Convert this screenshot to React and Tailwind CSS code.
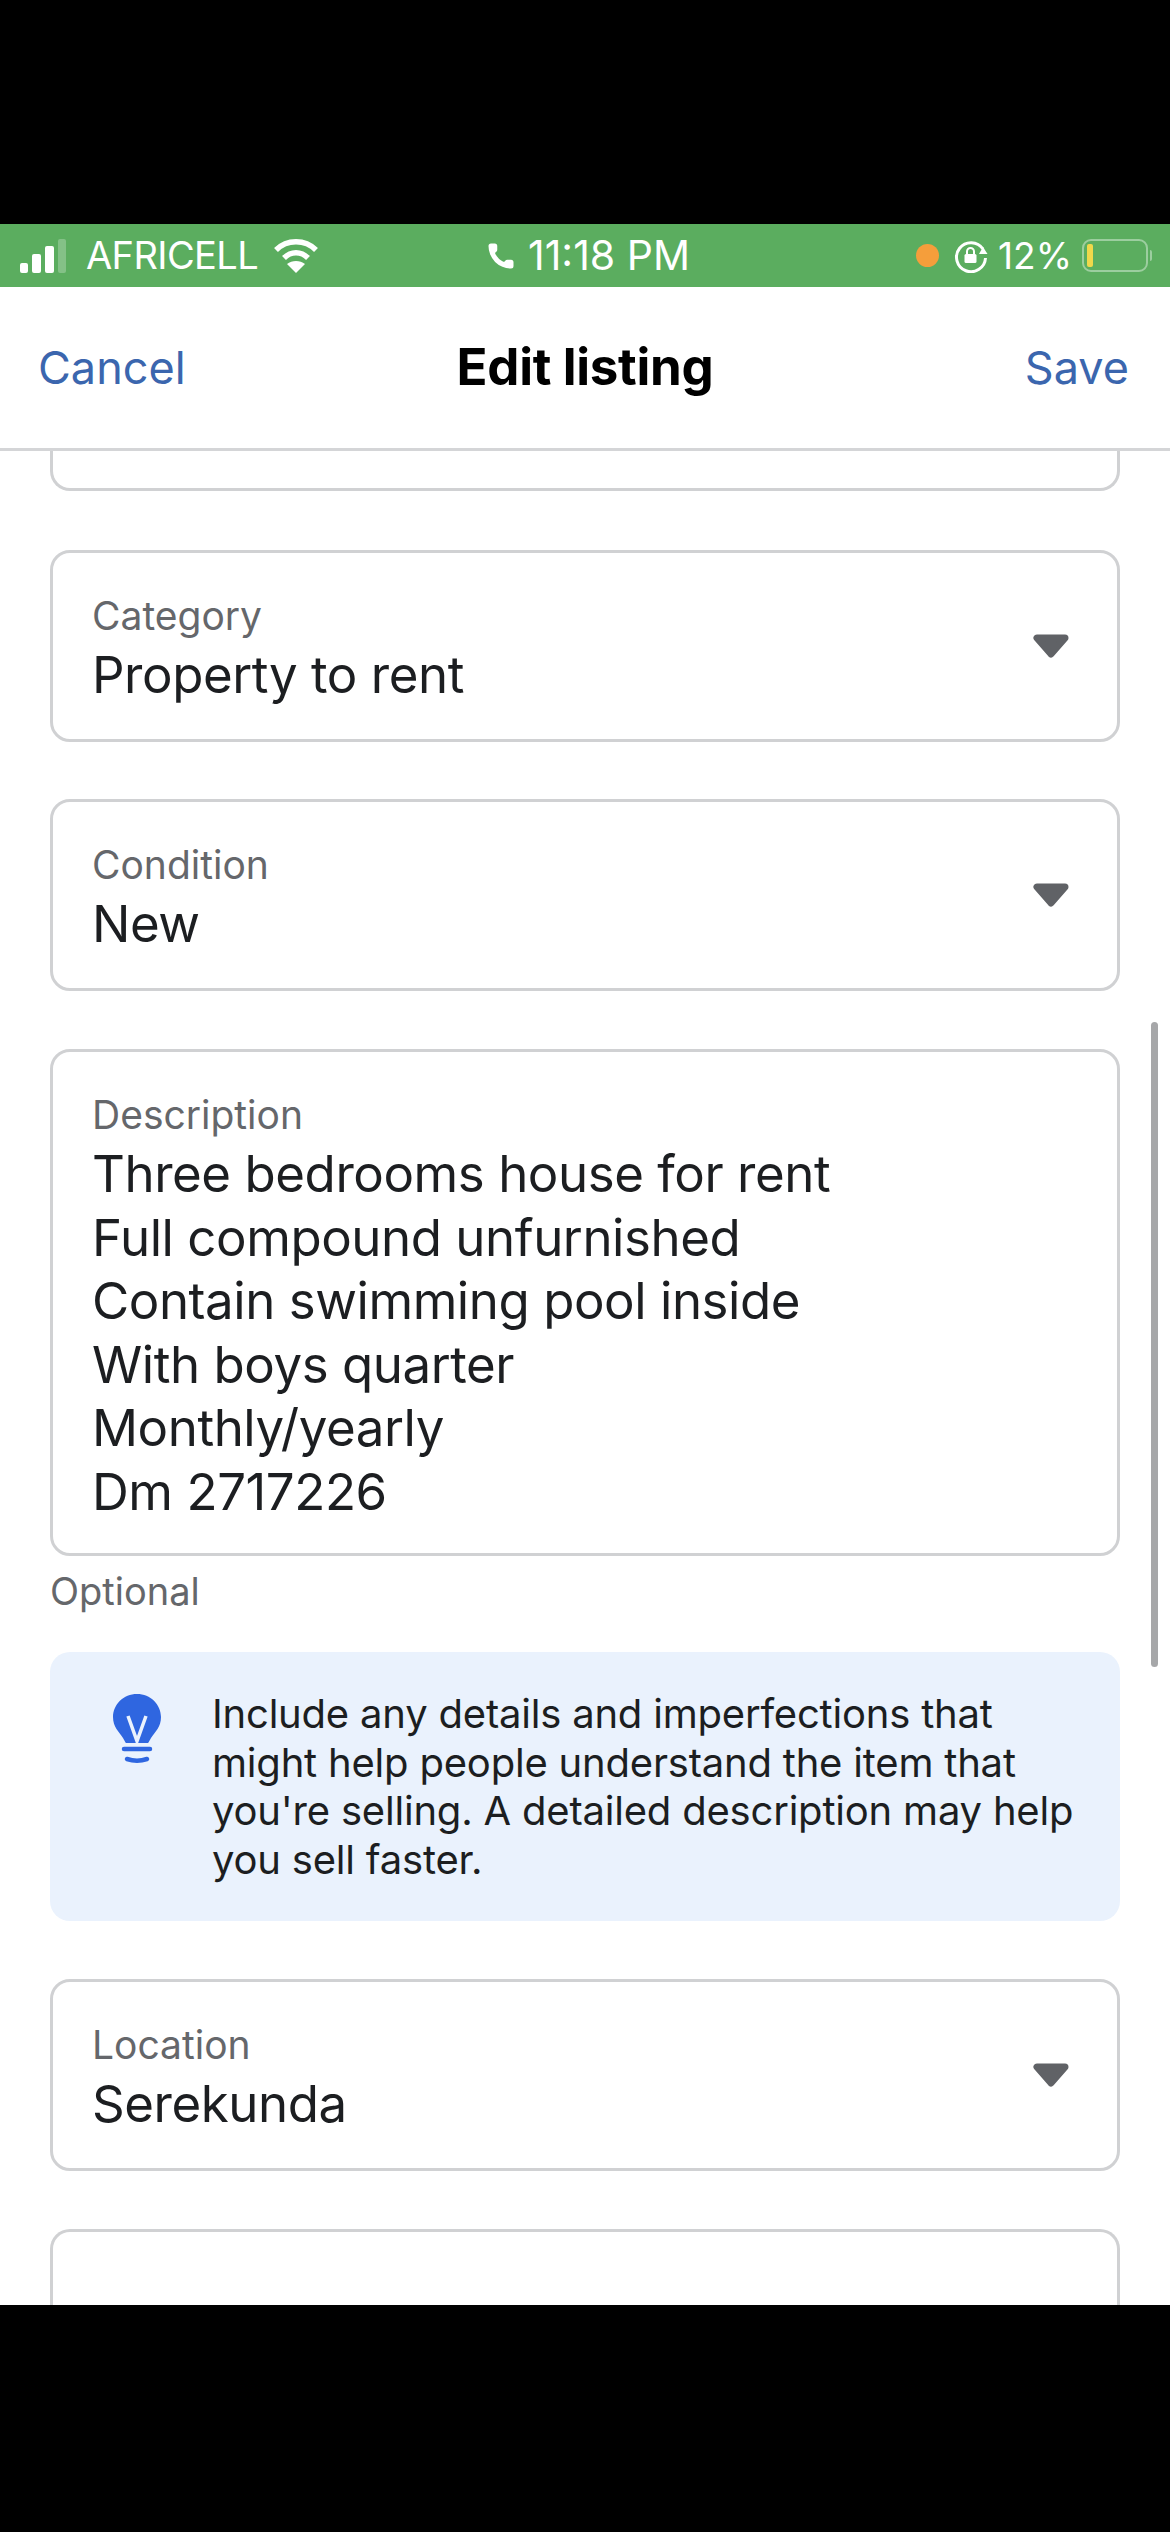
import { Phone } from 'lucide-react';

// Caret used on every dropdown field
function Caret() {
  return (
    <svg width="40" height="26" viewBox="0 0 40 26" className="shrink-0">
      <path d="M6 5 H34 L20 21 Z" fill="#606266" stroke="#606266" strokeWidth="7" strokeLinejoin="round" />
    </svg>
  );
}

function SelectField({ label, value }) {
  return (
    <div className="h-[192px] rounded-[20px] border-[3px] border-[#d0d1d3] pl-[39px] pr-[46px] flex items-center justify-between">
      <div className="flex flex-col pt-[3px]">
        <span className="text-[39px] leading-[54px] text-[#65676b]">{label}</span>
        <span className="text-[51px] leading-[64px] tracking-[-0.45px] text-[#1c1e21]">{value}</span>
      </div>
      <Caret />
    </div>
  );
}

function Signal() {
  return (
    <div className="flex items-end gap-[4px] h-[34px] mr-[5px]">
      <div className="w-[8px] h-[10px] rounded-[2px] bg-white" />
      <div className="w-[9px] h-[19px] rounded-[2px] bg-white" />
      <div className="w-[9px] h-[27px] rounded-[2px] bg-white" />
      <div className="w-[8px] h-[34px] rounded-[2px] bg-white/25" />
    </div>
  );
}

function Wifi() {
  return (
    <svg width="46" height="36" viewBox="0 0 46 36" fill="none" stroke="#fff" strokeWidth="5.5">
      <path d="M3 12 C14 1 32 1 43 12" />
      <path d="M11 20 C18 13 28 13 35 20" />
      <path d="M23 35 L14 26 C19 22 27 22 32 26 Z" fill="#fff" stroke="none" />
    </svg>
  );
}

function RotationLock() {
  return (
    <svg width="34" height="34" viewBox="0 0 34 34" fill="none">
      <path d="M29 10 A14.5 14.5 0 1 0 31.5 19" stroke="#fff" strokeWidth="3" />
      <path d="M33.5 15 L25 15 L29 8 Z" fill="#fff" />
      <rect x="10.5" y="15" width="12" height="9" rx="1.5" fill="#fff" />
      <path d="M13 15 V12.5 a3.5 3.5 0 0 1 7 0 V15" stroke="#fff" strokeWidth="2" />
    </svg>
  );
}

function Battery() {
  return (
    <div className="flex items-center gap-[2px]">
      <div className="w-[66px] h-[33px] rounded-[9px] border-[2px] border-white/40 p-[3px]">
        <div className="w-[6px] h-full rounded-[2px] bg-[#f0d84b]" />
      </div>
      <div className="w-[2px] h-[11px] rounded-r bg-white/40" />
    </div>
  );
}

function Bulb() {
  return (
    <svg width="48" height="72" viewBox="0 0 48 72" className="shrink-0 mt-[4px]">
      <path d="M24 0 C10.5 0 0 10.5 0 23 C0 33 6 38 10 44 C11.5 46.5 12 48 13 49 H35 C36 48 36.5 46.5 38 44 C42 38 48 33 48 23 C48 10.5 37.5 0 24 0 Z" fill="#2f66e0" />
      <path d="M15 22 L24 47 L33 22" fill="none" stroke="#eaf2fd" strokeWidth="3.5" />
      <path d="M11 55 H37 M14 65 C20 67 28 67 34 65" fill="none" stroke="#2f66e0" strokeWidth="4.5" strokeLinecap="round" />
    </svg>
  );
}

export default function App() {
  return (
    <div className="w-[1170px] h-[2532px] bg-black flex flex-col overflow-hidden font-['Inter',sans-serif]">
      <div className="h-[224px] shrink-0" />

      {/* status bar */}
      <div className="h-[63px] shrink-0 bg-[#5bad5f] text-white grid grid-cols-3 items-center pl-[20px] pr-[18px] text-[37px]">
        <div className="flex items-center gap-[15px]">
          <Signal />
          <span className="text-[38px] tracking-[-0.6px]">AFRICELL</span>
          <Wifi />
        </div>
        <div className="flex items-center justify-center gap-[12px] translate-x-[2px]">
          <Phone size={30} fill="#fff" strokeWidth={0} />
          <span className="text-[41px]">11:18 PM</span>
        </div>
        <div className="flex items-center justify-end gap-[10px]">
          <div className="w-[23px] h-[23px] rounded-full bg-[#f59e3b] mr-[5px]" />
          <RotationLock />
          <span>12%</span>
          <Battery />
        </div>
      </div>

      {/* nav */}
      <div className="relative h-[164px] shrink-0 bg-white border-b-[3px] border-[#d4d5d7] flex items-center justify-between pl-[38px] pr-[41px]">
        <span className="text-[45px] text-[#3b66ae]">Cancel</span>
        <span className="text-[45px] text-[#3b66ae]">Save</span>
        <span className="absolute inset-x-0 text-center text-[51px] font-bold tracking-[-0.3px] text-black">Edit listing</span>
      </div>

      {/* form, scrolled part way */}
      <div className="relative h-[1854px] shrink-0 bg-white overflow-hidden px-[50px]">
        <div className="h-[40px] rounded-b-[20px] border-x-[3px] border-b-[3px] border-[#d0d1d3]" />

        <div className="mt-[59px] flex flex-col gap-[57px]">
          <SelectField label="Category" value="Property to rent" />
          <SelectField label="Condition" value="New" />
        </div>

        <div className="mt-[58px] h-[507px] rounded-[20px] border-[3px] border-[#d0d1d3] pl-[39px] pt-[36px]">
          <div className="text-[39px] leading-[54px] text-[#65676b]">Description</div>
          <div className="text-[51px] leading-[63.6px] tracking-[-0.45px] text-[#1c1e21]">
            <div>Three bedrooms house for rent</div>
            <div>Full compound unfurnished</div>
            <div>Contain swimming pool inside</div>
            <div>With boys quarter</div>
            <div>Monthly/yearly</div>
            <div>Dm 2717226</div>
          </div>
        </div>
        <div className="mt-[12px] text-[38px] leading-[46px] text-[#65676b]">Optional</div>

        <div className="mt-[38px] h-[269px] rounded-[20px] bg-[#eaf2fd] flex pl-[63px] pt-[38px]">
          <Bulb />
          <div className="ml-[51px] text-[40px] leading-[48.5px] tracking-[-0.2px] text-[#1c1e21]">
            <div>Include any details and imperfections that</div>
            <div>might help people understand the item that</div>
            <div>you're selling. A detailed description may help</div>
            <div>you sell faster.</div>
          </div>
        </div>

        <div className="mt-[58px]">
          <SelectField label="Location" value="Serekunda" />
        </div>

        <div className="mt-[58px] h-[120px] rounded-t-[20px] border-x-[3px] border-t-[3px] border-[#d0d1d3]" />

        {/* scroll indicator */}
        <div className="absolute right-[12px] top-[571px] w-[7px] h-[645px] rounded-full bg-[#a6a7a9]" />
      </div>
    </div>
  );
}
